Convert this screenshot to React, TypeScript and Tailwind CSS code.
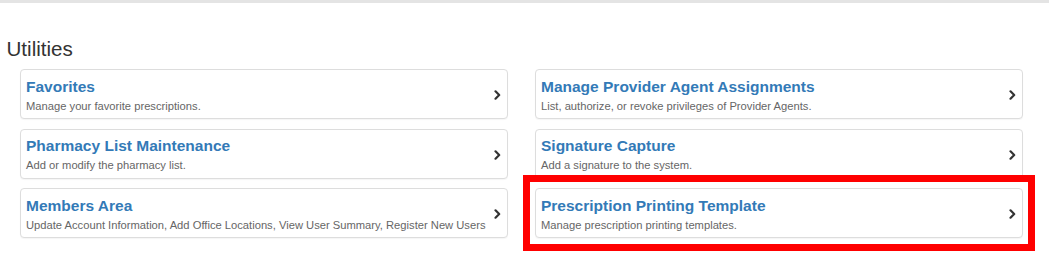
import React from "react";

type Item = { title: string; desc: string; highlight?: boolean };

const left: Item[] = [
  { title: "Favorites", desc: "Manage your favorite prescriptions." },
  { title: "Pharmacy List Maintenance", desc: "Add or modify the pharmacy list." },
  {
    title: "Members Area",
    desc: "Update Account Information, Add Office Locations, View User Summary, Register New Users",
  },
];

const right: Item[] = [
  { title: "Manage Provider Agent Assignments", desc: "List, authorize, or revoke privileges of Provider Agents." },
  { title: "Signature Capture", desc: "Add a signature to the system." },
  { title: "Prescription Printing Template", desc: "Manage prescription printing templates.", highlight: true },
];

function Chevron() {
  return (
    <svg width="7" height="10" viewBox="0 0 7 10" className="shrink-0">
      <polyline points="1.5,1.3 5.2,5 1.5,8.7" fill="none" stroke="#333333" strokeWidth="2.2" strokeLinecap="round" strokeLinejoin="round" />
    </svg>
  );
}

function Card({ item }: { item: Item }) {
  return (
    <div className="relative">
      <div className="flex h-[50px] items-center rounded-[4px] border border-[#dddddd] bg-white pl-[5px] pr-[6px] shadow-[0_1px_1px_rgba(0,0,0,0.04)]">
        <div className="flex min-w-0 flex-1 flex-col pt-[7px] pb-[4px]">
          <div className="text-[15.5px] font-bold leading-[18px] text-[#337ab7]">{item.title}</div>
          <div className="mt-[2px] whitespace-nowrap text-[11.2px] leading-[16px] text-[#666666]">{item.desc}</div>
        </div>
        <div className="pt-[2px]">
          <Chevron />
        </div>
      </div>
      {item.highlight && (
        <div className="pointer-events-none absolute -left-[12px] -right-[12px] -top-[13px] -bottom-[13px] border-[7px] border-[#ff0000]" />
      )}
    </div>
  );
}

export default function App() {
  return (
    <div className="h-[255px] w-[1049px] bg-white" style={{ fontFamily: '"Liberation Sans", Arial, sans-serif' }}>
      <div className="h-[3px] w-full bg-[#e4e4e4]" />
      <h2 className="mt-[34px] pl-[6.5px] text-[20.6px] font-normal leading-[23px] text-[#333333]">Utilities</h2>
      <div className="mt-[9px] flex gap-[27px] pl-[20px]">
        <div className="flex w-[488px] flex-col gap-[9.5px]">
          {left.map((it) => (
            <Card key={it.title} item={it} />
          ))}
        </div>
        <div className="flex w-[488px] flex-col gap-[9.5px]">
          {right.map((it) => (
            <Card key={it.title} item={it} />
          ))}
        </div>
      </div>
    </div>
  );
}
